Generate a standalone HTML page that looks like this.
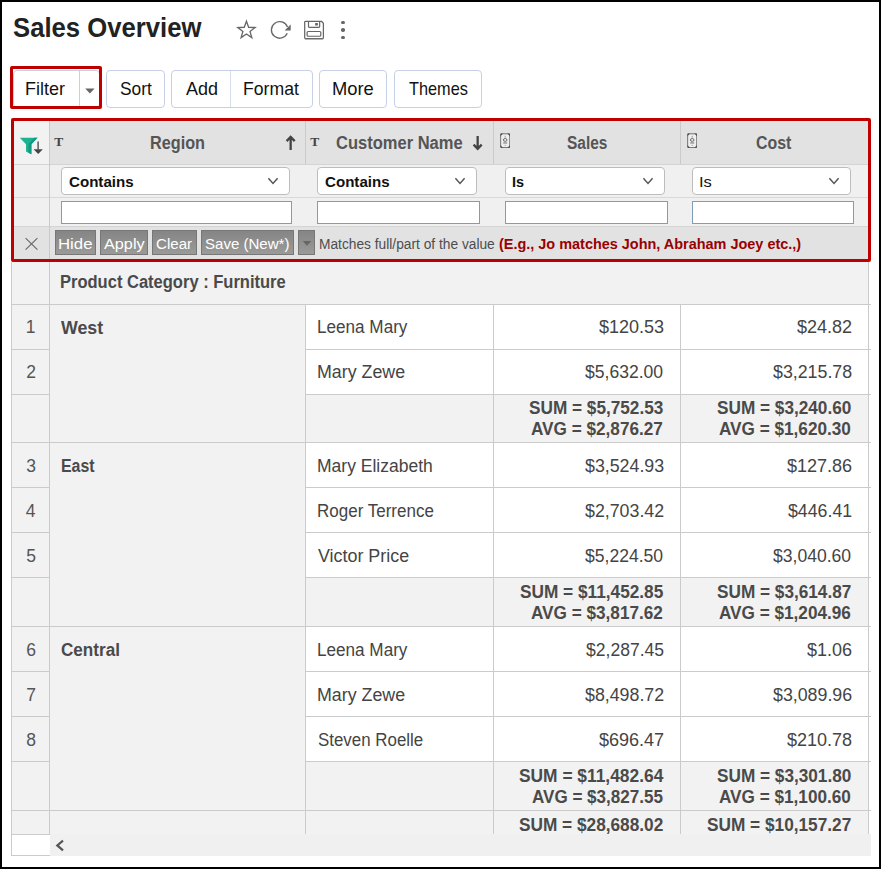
<!DOCTYPE html>
<html lang="en"><head><meta charset="utf-8"><title>Sales Overview</title>
<style>
html,body{margin:0;padding:0}
body{width:881px;height:869px;position:relative;overflow:hidden;background:#fff;font-family:"Liberation Sans",sans-serif;color:#444}
.a,.t{position:absolute}
.t{white-space:nowrap;transform-origin:0 0;margin:0;font-weight:400}
.btn{position:absolute;box-sizing:border-box;border:1px solid #c6d0e6;border-radius:4px;background:#fff;top:70px;height:38px}
.sel{position:absolute;box-sizing:border-box;border:1px solid #bdbdbd;border-radius:4px;background:#fff;top:167px;height:28px}
.inp{position:absolute;box-sizing:border-box;border:1px solid #7f9db9;background:#fff;top:201px;height:23px}
.gb{position:absolute;box-sizing:border-box;border:1px solid #777;background:linear-gradient(#858585,#9a9a98);top:230px;height:25px}
.hl{position:absolute;height:1px;background:#cbcbcb}
.vl{position:absolute;width:1px;background:#cbcbcb}
.g{position:absolute;background:#f2f2f2}
.hi{position:absolute;box-sizing:border-box;border:3px solid #c00000;border-radius:2px}
</style></head>
<body>
<header>
<h1 class="t" style="left:12.80px;top:12px;font-size:27.5px;line-height:31px;font-weight:700;color:#222;transform:scaleX(0.9337);">Sales Overview</h1>
<svg class="a" style="left:234px;top:17px" width="26" height="26" viewBox="234 17 26 26"><path d="M246.45 21.20L248.65 27.27L255.10 27.49L250.02 31.46L251.80 37.66L246.45 34.05L241.10 37.66L242.88 31.46L237.80 27.49L244.25 27.27z" fill="none" stroke="#666" stroke-width="1.3" stroke-linejoin="miter" stroke-miterlimit="6"/></svg>
<svg class="a" style="left:268px;top:17px" width="28" height="26" viewBox="268 17 28 26"><path d="M287.45 26.93A8.3 8.3 0 1 0 287.28 33.28" fill="none" stroke="#666" stroke-width="1.3"/><path d="M290.7 24.6v5.8h-6.1z" fill="#666"/></svg>
<svg class="a" style="left:302px;top:18px" width="26" height="24" viewBox="302 18 26 24"><path d="M305.5 21.45h16.1l1.8 1.8v14.55a.8.8 0 0 1-.8.8h-17.1a.8.8 0 0 1-.8-.8v-15.55a.8.8 0 0 1 .8-.8z" fill="none" stroke="#666" stroke-width="1.25"/><rect x="307.1" y="31.5" width="13.7" height="4.75" rx="1" fill="none" stroke="#666" stroke-width="1.2"/><path d="M308.5 21.6v4.9a.8.8 0 0 0 .8.8h9.55a.8.8 0 0 0 .8-.8v-4.9" fill="none" stroke="#666" stroke-width="1.2"/><rect x="315.1" y="23.05" width="2.8" height="2.55" rx=".5" fill="#666"/><path d="M304.9 39.3h18.3" stroke="#999" stroke-width=".7"/></svg>
<i class="a" style="left:341px;top:20.6px;width:3.6px;height:3.6px;border-radius:50%;background:#666"></i>
<i class="a" style="left:341px;top:28.1px;width:3.6px;height:3.6px;border-radius:50%;background:#666"></i>
<i class="a" style="left:341px;top:35.6px;width:3.6px;height:3.6px;border-radius:50%;background:#666"></i>
</header>
<nav>
<div class="btn" style="left:13px;width:87px"></div>
<div class="a" style="left:79px;top:70px;width:1px;height:37px;background:#c6d0e6"></div>
<div class="btn" style="left:106px;width:59px"></div>
<div class="btn" style="left:171px;width:142px"></div>
<div class="a" style="left:230px;top:71px;width:1px;height:36px;background:#d5dcec"></div>
<div class="btn" style="left:319px;width:68px"></div>
<div class="btn" style="left:394px;width:88px"></div>
<svg class="a" style="left:84px;top:86.6px" width="12" height="8" viewBox="0 0 12 8"><path d="M1.2 1.6h9.4L5.9 6.6z" fill="#666"/></svg>
<div class="hi" style="left:10px;top:66px;width:92px;height:43px"></div>
<span class="t" style="left:24.99px;top:79px;font-size:17.75px;line-height:20px;color:#111;transform:scaleX(1.0121);">Filter</span>
<span class="t" style="left:119.50px;top:79px;font-size:17.75px;line-height:20px;color:#111;transform:scaleX(0.9779);">Sort</span>
<span class="t" style="left:185.50px;top:79px;font-size:17.75px;line-height:20px;color:#111;transform:scaleX(1.0159);">Add</span>
<span class="t" style="left:243.11px;top:79px;font-size:17.75px;line-height:20px;color:#111;transform:scaleX(0.9931);">Format</span>
<span class="t" style="left:332.47px;top:79px;font-size:17.75px;line-height:20px;color:#111;transform:scaleX(1.0337);">More</span>
<span class="t" style="left:408.70px;top:79px;font-size:17.75px;line-height:20px;color:#111;transform:scaleX(0.9184);">Themes</span>
</nav>
<main>
<section id="grid">
<div class="g" style="left:12px;top:262px;width:293px;height:572px"></div>
<div class="g" style="left:12px;top:262px;width:856px;height:42px"></div>
<div class="g" style="left:306px;top:395px;width:562px;height:47px"></div>
<div class="g" style="left:306px;top:578px;width:562px;height:48px"></div>
<div class="g" style="left:306px;top:762px;width:562px;height:48px"></div>
<div class="g" style="left:306px;top:811px;width:562px;height:23px"></div>
<div class="vl" style="left:11px;top:262px;height:594px"></div>
<div class="vl" style="left:49px;top:262px;height:573px"></div>
<div class="vl" style="left:305px;top:304px;height:530px"></div>
<div class="vl" style="left:493px;top:304px;height:530px"></div>
<div class="vl" style="left:680px;top:304px;height:530px"></div>
<div class="vl" style="left:868px;top:262px;height:572px"></div>
<div class="hl" style="left:11px;top:304px;width:860px"></div>
<div class="hl" style="left:11px;top:442px;width:860px"></div>
<div class="hl" style="left:11px;top:626px;width:860px"></div>
<div class="hl" style="left:11px;top:810px;width:860px"></div>
<div class="hl" style="left:11px;top:349px;width:39px"></div>
<div class="hl" style="left:305px;top:349px;width:566px"></div>
<div class="hl" style="left:11px;top:394px;width:39px"></div>
<div class="hl" style="left:305px;top:394px;width:566px"></div>
<div class="hl" style="left:11px;top:487px;width:39px"></div>
<div class="hl" style="left:305px;top:487px;width:566px"></div>
<div class="hl" style="left:11px;top:532px;width:39px"></div>
<div class="hl" style="left:305px;top:532px;width:566px"></div>
<div class="hl" style="left:11px;top:577px;width:39px"></div>
<div class="hl" style="left:305px;top:577px;width:566px"></div>
<div class="hl" style="left:11px;top:671px;width:39px"></div>
<div class="hl" style="left:305px;top:671px;width:566px"></div>
<div class="hl" style="left:11px;top:716px;width:39px"></div>
<div class="hl" style="left:305px;top:716px;width:566px"></div>
<div class="hl" style="left:11px;top:761px;width:39px"></div>
<div class="hl" style="left:305px;top:761px;width:566px"></div>
<span class="t" style="left:60.08px;top:272px;font-size:18px;line-height:20px;font-weight:700;color:#4a4a4a;transform:scaleX(0.9175);">Product Category : Furniture</span>
<span class="t" style="left:25.70px;top:317px;font-size:17.5px;line-height:20px;color:#555;">1</span>
<span class="t" style="left:60.80px;top:318px;font-size:18px;line-height:20px;font-weight:700;color:#4a4a4a;transform:scaleX(0.9886);">West</span>
<span class="t" style="left:317.02px;top:317px;font-size:17.5px;line-height:20px;transform:scaleX(0.9785);">Leena Mary</span>
<span class="t" style="left:598.86px;top:317px;font-size:17.5px;line-height:20px;transform:scaleX(1.0298);">$120.53</span>
<span class="t" style="left:796.87px;top:317px;font-size:17.5px;line-height:20px;transform:scaleX(1.0291);">$24.82</span>
<span class="t" style="left:26.20px;top:362px;font-size:17.5px;line-height:20px;color:#555;">2</span>
<span class="t" style="left:316.98px;top:362px;font-size:17.5px;line-height:20px;transform:scaleX(1.0173);">Mary Zewe</span>
<span class="t" style="left:584.86px;top:362px;font-size:17.5px;line-height:20px;transform:scaleX(1.0034);">$5,632.00</span>
<span class="t" style="left:772.81px;top:362px;font-size:17.5px;line-height:20px;transform:scaleX(1.0164);">$3,215.78</span>
<span class="t" style="left:26.20px;top:456px;font-size:17.5px;line-height:20px;color:#555;">3</span>
<span class="t" style="left:60.92px;top:456px;font-size:18px;line-height:20px;font-weight:700;color:#4a4a4a;transform:scaleX(0.8831);">East</span>
<span class="t" style="left:317.00px;top:456px;font-size:17.5px;line-height:20px;">Mary Elizabeth</span>
<span class="t" style="left:584.86px;top:456px;font-size:17.5px;line-height:20px;transform:scaleX(1.0164);">$3,524.93</span>
<span class="t" style="left:786.81px;top:456px;font-size:17.5px;line-height:20px;transform:scaleX(1.0298);">$127.86</span>
<span class="t" style="left:25.70px;top:501px;font-size:17.5px;line-height:20px;color:#555;">4</span>
<span class="t" style="left:317.03px;top:501px;font-size:17.5px;line-height:20px;transform:scaleX(0.9714);">Roger Terrence</span>
<span class="t" style="left:584.86px;top:501px;font-size:17.5px;line-height:20px;transform:scaleX(1.0164);">$2,703.42</span>
<span class="t" style="left:787.81px;top:501px;font-size:17.5px;line-height:20px;transform:scaleX(1.0138);">$446.41</span>
<span class="t" style="left:26.20px;top:546px;font-size:17.5px;line-height:20px;color:#555;">5</span>
<span class="t" style="left:318.00px;top:546px;font-size:17.5px;line-height:20px;transform:scaleX(1.0222);">Victor Price</span>
<span class="t" style="left:584.86px;top:546px;font-size:17.5px;line-height:20px;transform:scaleX(1.0034);">$5,224.50</span>
<span class="t" style="left:772.81px;top:546px;font-size:17.5px;line-height:20px;transform:scaleX(1.0034);">$3,040.60</span>
<span class="t" style="left:26.20px;top:640px;font-size:17.5px;line-height:20px;color:#555;">6</span>
<span class="t" style="left:61.40px;top:640px;font-size:18px;line-height:20px;font-weight:700;color:#4a4a4a;transform:scaleX(0.9506);">Central</span>
<span class="t" style="left:317.02px;top:640px;font-size:17.5px;line-height:20px;transform:scaleX(0.9785);">Leena Mary</span>
<span class="t" style="left:585.86px;top:640px;font-size:17.5px;line-height:20px;transform:scaleX(1.0034);">$2,287.45</span>
<span class="t" style="left:806.93px;top:640px;font-size:17.5px;line-height:20px;transform:scaleX(1.0281);">$1.06</span>
<span class="t" style="left:26.20px;top:685px;font-size:17.5px;line-height:20px;color:#555;">7</span>
<span class="t" style="left:316.98px;top:685px;font-size:17.5px;line-height:20px;transform:scaleX(1.0173);">Mary Zewe</span>
<span class="t" style="left:584.86px;top:685px;font-size:17.5px;line-height:20px;transform:scaleX(1.0164);">$8,498.72</span>
<span class="t" style="left:772.81px;top:685px;font-size:17.5px;line-height:20px;transform:scaleX(1.0164);">$3,089.96</span>
<span class="t" style="left:26.20px;top:730px;font-size:17.5px;line-height:20px;color:#555;">8</span>
<span class="t" style="left:318.00px;top:730px;font-size:17.5px;line-height:20px;transform:scaleX(0.9654);">Steven Roelle</span>
<span class="t" style="left:598.86px;top:730px;font-size:17.5px;line-height:20px;transform:scaleX(1.0298);">$696.47</span>
<span class="t" style="left:786.81px;top:730px;font-size:17.5px;line-height:20px;transform:scaleX(1.0298);">$210.78</span>
<span class="t" style="left:528.92px;top:398px;font-size:18px;line-height:20px;font-weight:700;color:#4a4a4a;transform:scaleX(0.9555);">SUM = $5,752.53</span>
<span class="t" style="left:531.39px;top:419px;font-size:18px;line-height:20px;font-weight:700;color:#4a4a4a;transform:scaleX(0.9538);">AVG = $2,876.27</span>
<span class="t" style="left:716.87px;top:398px;font-size:18px;line-height:20px;font-weight:700;color:#4a4a4a;transform:scaleX(0.9555);">SUM = $3,240.60</span>
<span class="t" style="left:719.34px;top:419px;font-size:18px;line-height:20px;font-weight:700;color:#4a4a4a;transform:scaleX(0.9538);">AVG = $1,620.30</span>
<span class="t" style="left:519.98px;top:582px;font-size:18px;line-height:20px;font-weight:700;color:#4a4a4a;transform:scaleX(0.9577);">SUM = $11,452.85</span>
<span class="t" style="left:531.39px;top:603px;font-size:18px;line-height:20px;font-weight:700;color:#4a4a4a;transform:scaleX(0.9538);">AVG = $3,817.62</span>
<span class="t" style="left:716.87px;top:582px;font-size:18px;line-height:20px;font-weight:700;color:#4a4a4a;transform:scaleX(0.9555);">SUM = $3,614.87</span>
<span class="t" style="left:719.34px;top:603px;font-size:18px;line-height:20px;font-weight:700;color:#4a4a4a;transform:scaleX(0.9538);">AVG = $1,204.96</span>
<span class="t" style="left:518.98px;top:766px;font-size:18px;line-height:20px;font-weight:700;color:#4a4a4a;transform:scaleX(0.9644);">SUM = $11,482.64</span>
<span class="t" style="left:532.39px;top:787px;font-size:18px;line-height:20px;font-weight:700;color:#4a4a4a;transform:scaleX(0.9466);">AVG = $3,827.55</span>
<span class="t" style="left:716.87px;top:766px;font-size:18px;line-height:20px;font-weight:700;color:#4a4a4a;transform:scaleX(0.9555);">SUM = $3,301.80</span>
<span class="t" style="left:719.34px;top:787px;font-size:18px;line-height:20px;font-weight:700;color:#4a4a4a;transform:scaleX(0.9538);">AVG = $1,100.60</span>
<span class="t" style="left:518.98px;top:815px;font-size:18px;line-height:20px;font-weight:700;color:#4a4a4a;transform:scaleX(0.9580);">SUM = $28,688.02</span>
<span class="t" style="left:706.93px;top:815px;font-size:18px;line-height:20px;font-weight:700;color:#4a4a4a;transform:scaleX(0.9580);">SUM = $10,157.27</span>
<footer>
<div class="a" style="left:50px;top:834px;width:821px;height:22px;background:#f0f0f0"></div>
<div class="hl" style="left:11px;top:834px;width:39px"></div>
<div class="hl" style="left:11px;top:855px;width:39px"></div>
<svg class="a" style="left:54px;top:838px" width="12" height="14" viewBox="0 0 12 14"><path d="M9 2.600L3.300 7.400 9 12.300" fill="none" stroke="#555" stroke-width="2.200"/></svg>
</footer>
</section>
<section id="filter-panel">
<div class="a" style="left:13px;top:120px;width:855px;height:44px;background:#e2e2e2"></div>
<div class="a" style="left:13px;top:120px;width:36px;height:44px;background:#f2f2f2"></div>
<div class="a" style="left:13px;top:164px;width:855px;height:62px;background:#f0f0f0"></div>
<div class="a" style="left:13px;top:226px;width:855px;height:33px;background:#e2e2e2"></div>
<div class="hl" style="left:13px;top:164px;width:855px;background:#d4d4d4"></div>
<div class="hl" style="left:13px;top:197px;width:855px;background:#d8d8d8"></div>
<div class="hl" style="left:13px;top:226px;width:855px;background:#d4d4d4"></div>
<div class="vl" style="left:305px;top:121px;height:43px;background:#cacaca"></div>
<div class="vl" style="left:493px;top:121px;height:43px;background:#cacaca"></div>
<div class="vl" style="left:680px;top:121px;height:43px;background:#cacaca"></div>
<div class="vl" style="left:49px;top:121px;height:141px;background:#cacaca"></div>
<div class="sel" style="left:61px;width:229px"></div>
<svg class="a" style="left:266px;top:176px" width="14" height="10" viewBox="0 0 14 10"><path d="M2.4 2.3L7 7.5l4.6-5.2" fill="none" stroke="#555" stroke-width="1.45"/></svg>
<div class="sel" style="left:317px;width:160px"></div>
<svg class="a" style="left:453px;top:176px" width="14" height="10" viewBox="0 0 14 10"><path d="M2.4 2.3L7 7.5l4.6-5.2" fill="none" stroke="#555" stroke-width="1.45"/></svg>
<div class="sel" style="left:505px;width:160px"></div>
<svg class="a" style="left:641px;top:176px" width="14" height="10" viewBox="0 0 14 10"><path d="M2.4 2.3L7 7.5l4.6-5.2" fill="none" stroke="#555" stroke-width="1.45"/></svg>
<div class="sel" style="left:692px;width:159px"></div>
<svg class="a" style="left:827px;top:176px" width="14" height="10" viewBox="0 0 14 10"><path d="M2.4 2.3L7 7.5l4.6-5.2" fill="none" stroke="#555" stroke-width="1.45"/></svg>
<div class="inp" style="left:61px;width:231px"></div>
<div class="inp" style="left:317px;width:163px"></div>
<div class="inp" style="left:505px;width:163px"></div>
<div class="inp" style="left:692px;width:162px"></div>
<div class="gb" style="left:55px;width:41px"></div>
<div class="gb" style="left:100px;width:48px"></div>
<div class="gb" style="left:152px;width:45px"></div>
<div class="gb" style="left:201px;width:93px"></div>
<div class="gb" style="left:298px;width:17px"></div>
<svg class="a" style="left:301.500px;top:240px" width="10" height="7" viewBox="0 0 10 7"><path d="M0.8 1h8.4L5 5.8z" fill="#666"/></svg>
<svg class="a" style="left:24px;top:237px" width="15" height="14" viewBox="0 0 15 14"><path d="M1.6 1.2l11.8 11.400M13.4 1.2L1.600 12.600" stroke="#666" stroke-width="1.1" fill="none"/></svg>
<svg class="a" style="left:18px;top:136px" width="27" height="20" viewBox="0 0 27 20">
<path d="M1.8 1.8h17.8l-6.2 6.4v10L8 15.4V8.2z" fill="#1ab394"/>
<path d="M19.6 1.800l-6.2 6.400v10l-3-1.500V7.900l6-6.100z" fill="#129a7f"/>
<path d="M20.100 5.600v8" stroke="#444" stroke-width="1.3"/>
<path d="M15.600 13.200h9.200l-4.600 4.800z" fill="#444"/>
</svg>
<span class="t" style="left:54.3px;top:133.900px;font-family:'Liberation Serif',serif;font-weight:700;font-size:13.500px;color:#444">T</span>
<span class="t" style="left:310.3px;top:133.900px;font-family:'Liberation Serif',serif;font-weight:700;font-size:13.500px;color:#444">T</span>
<svg class="a" style="left:499.5px;top:132.700px" width="10.400" height="15.400" viewBox="0 0 11 16">
<rect x="0.700" y="0.700" width="9.600" height="14.600" rx="1.400" fill="#efefef" stroke="#6a6a6a" stroke-width="1"/>
<path d="M0.500 0.500h2.700L0.500 3.200zM10.500 0.500H7.800l2.700 2.700zM0.500 15.500h2.700L0.500 12.800zM10.500 15.500H7.800l2.700-2.700z" fill="#4a4a4a"/>
<ellipse cx="5.500" cy="7.200" rx="1.900" ry="1.500" fill="none" stroke="#555" stroke-width=".9"/>
<path d="M3.400 10.400h4.200" stroke="#555" stroke-width=".9"/>
<path d="M5.500 2.800v2M5.500 12.400v1.200" stroke="#777" stroke-width=".7"/>
</svg>
<svg class="a" style="left:686.8px;top:132.700px" width="10.400" height="15.400" viewBox="0 0 11 16">
<rect x="0.700" y="0.700" width="9.600" height="14.600" rx="1.400" fill="#efefef" stroke="#6a6a6a" stroke-width="1"/>
<path d="M0.500 0.500h2.700L0.500 3.200zM10.500 0.500H7.800l2.700 2.700zM0.500 15.500h2.700L0.500 12.800zM10.500 15.500H7.800l2.700-2.700z" fill="#4a4a4a"/>
<ellipse cx="5.500" cy="7.200" rx="1.900" ry="1.500" fill="none" stroke="#555" stroke-width=".9"/>
<path d="M3.400 10.400h4.200" stroke="#555" stroke-width=".9"/>
<path d="M5.500 2.800v2M5.500 12.400v1.200" stroke="#777" stroke-width=".7"/>
</svg>
<svg class="a" style="left:284px;top:134px" width="14" height="18" viewBox="0 0 14 18"><path d="M6.650 15.900V3M2.600 7.100L6.650 2.900l4.050 4.200" fill="none" stroke="#444" stroke-width="2.3"/></svg>
<svg class="a" style="left:470.700px;top:134px" width="14" height="18" viewBox="0 0 14 18"><path d="M6.650 1.900V14.800M2.600 10.600l4.050 4.200 4.050-4.200" fill="none" stroke="#444" stroke-width="2.3"/></svg>
<span class="t" style="left:150.38px;top:132px;font-size:18.75px;line-height:21px;font-weight:700;color:#555;transform:scaleX(0.8658);">Region</span>
<span class="t" style="left:336.25px;top:132px;font-size:18.75px;line-height:21px;font-weight:700;color:#555;transform:scaleX(0.8806);">Customer Name</span>
<span class="t" style="left:567.00px;top:132px;font-size:18.75px;line-height:21px;font-weight:700;color:#555;transform:scaleX(0.8235);">Sales</span>
<span class="t" style="left:756.30px;top:132px;font-size:18.75px;line-height:21px;font-weight:700;color:#555;transform:scaleX(0.8486);">Cost</span>
<span class="t" style="left:68.60px;top:173px;font-size:15px;line-height:17px;font-weight:700;color:#111;transform:scaleX(1.0074);">Contains</span>
<span class="t" style="left:325.00px;top:173px;font-size:15px;line-height:17px;font-weight:700;color:#111;transform:scaleX(1.0067);">Contains</span>
<span class="t" style="left:512.04px;top:173px;font-size:15px;line-height:17px;font-weight:700;color:#111;transform:scaleX(0.9626);">Is</span>
<span class="t" style="left:698.70px;top:173px;font-size:15px;line-height:17px;color:#111;transform:scaleX(1.1000);">Is</span>
<span class="t" style="left:57.92px;top:235px;font-size:15.5px;line-height:17px;color:#fff;transform:scaleX(1.0807);">Hide</span>
<span class="t" style="left:103.50px;top:235px;font-size:15.5px;line-height:17px;color:#fff;transform:scaleX(1.0481);">Apply</span>
<span class="t" style="left:156.40px;top:235px;font-size:15.5px;line-height:17px;color:#fff;transform:scaleX(0.9735);">Clear</span>
<span class="t" style="left:205.40px;top:235px;font-size:15.5px;line-height:17px;color:#fff;transform:scaleX(0.9708);">Save (New*)</span>
<span class="t" style="left:318.52px;top:236px;font-size:14px;line-height:16px;color:#4d4d4d;transform:scaleX(0.9820);">Matches full/part of the value</span>
<span class="t" style="left:499.25px;top:235px;font-size:15px;line-height:17px;font-weight:700;color:#990000;transform:scaleX(0.9631);">(E.g., Jo matches John, Abraham Joey etc.,)</span>
<div class="hi" style="left:10.500px;top:117.500px;width:860.500px;height:144.800px;border-width:3.200px"></div>
</section>
</main>
<div class="a" style="left:0;top:0;width:881px;height:869px;box-sizing:border-box;border:2px solid #000"></div>
</body></html>
